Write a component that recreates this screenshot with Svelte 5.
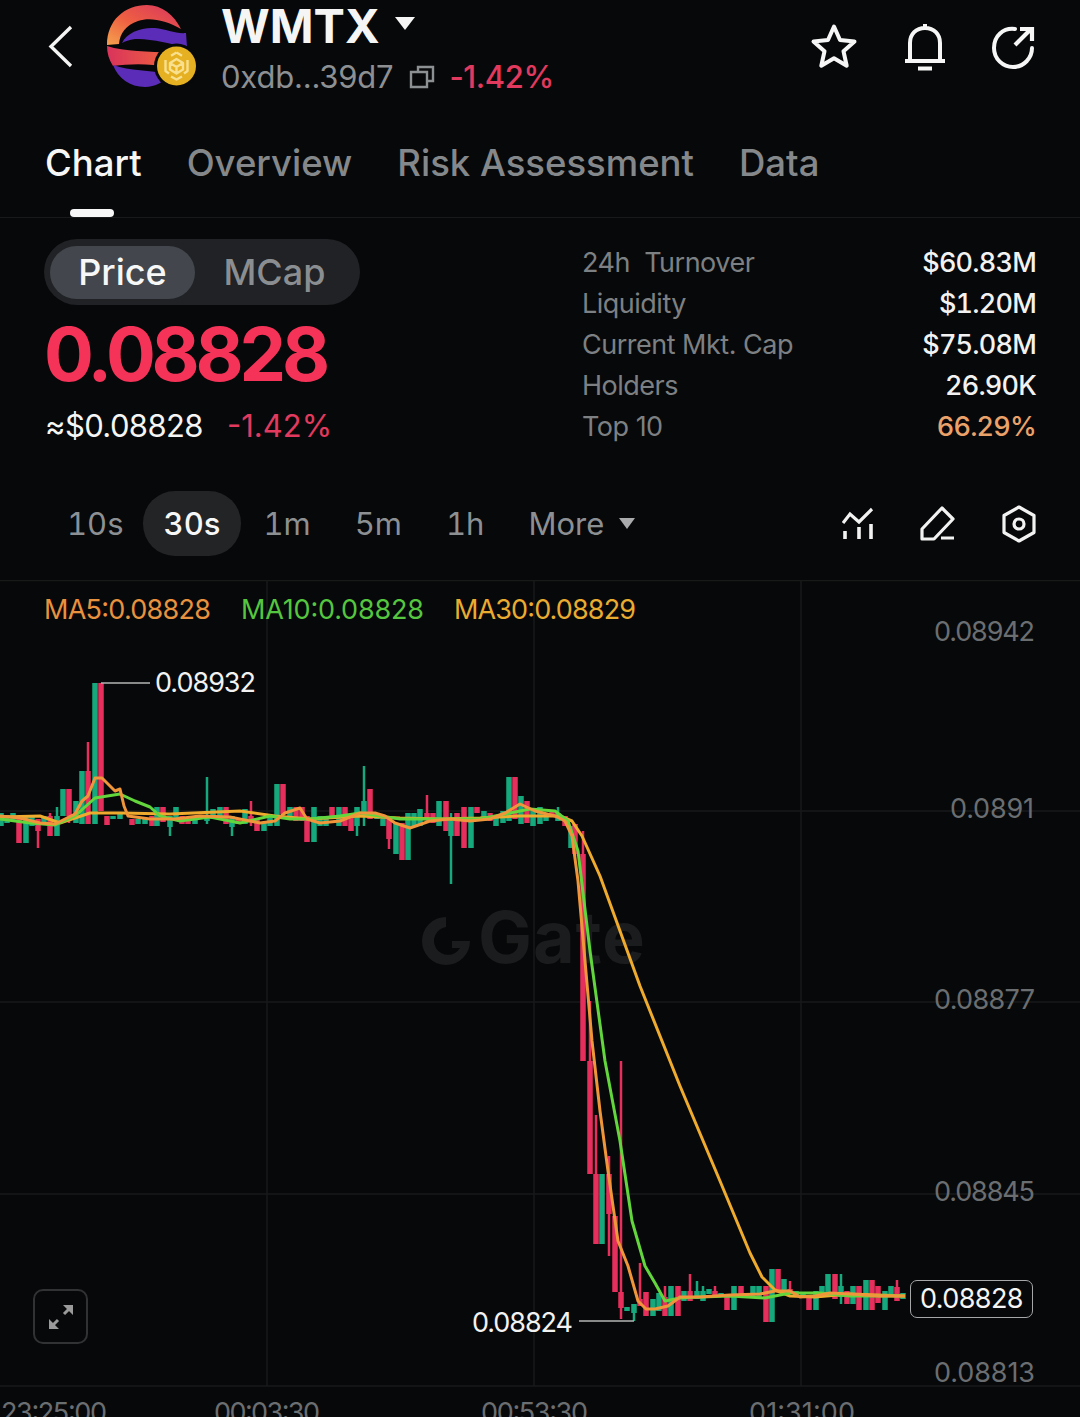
<script>
    const tabs = ['Chart', 'Overview', 'Risk Assessment', 'Data'];
    const stats = [
        ['24h  Turnover', '$60.83M'],
        ['Liquidity', '$1.20M'],
        ['Current Mkt. Cap', '$75.08M'],
        ['Holders', '26.90K'],
        ['Top 10', '66.29%']
    ];
    const frames = ['10s', '30s', '1m', '5m', '1h'];

    // [x, bodyTop, bodyBottom, colour, wickTop, wickBottom]
    const candles = [
        [1,812,825,'g'],[7,814,822,'g'],[13,812,820,'g'],[19,815,842,'r'],[26,815,842,'g'],[32,816,825,'g'],
        [38,818,830,'r',818,847],[44,815,822,'g'],[50,815,835,'r',812],[57,815,835,'g',806],[63,788,815,'g'],
        [69,788,815,'r',788,822],[76,800,822,'g'],[82,770,823,'g'],[88,770,823,'r',741],[95,682,823,'g'],
        [101,682,810,'r'],[107,815,824,'r'],[113,815,818,'g'],[120,812,818,'g'],[132,818,824,'r'],[138,818,823,'g'],
        [145,818,823,'g'],[152,815,825,'r'],[157,806,825,'g'],[163,806,821,'r'],[170,815,826,'g',815,835],
        [176,806,820,'g'],[182,815,823,'r'],[188,818,823,'r'],[195,815,823,'g'],[207,815,820,'g',776,823],
        [213,808,818,'g'],[220,806,815,'g'],[226,806,823,'r'],[232,815,826,'g',815,835],[238,818,823,'r'],
        [245,808,823,'g'],[251,815,820,'r',800,825],[257,818,830,'r'],[264,822,830,'g'],[270,815,825,'g'],
        [277,783,825,'g'],[283,783,813,'r'],[290,806,815,'g'],[296,806,820,'r'],[302,806,820,'r'],[307,815,841,'r'],
        [314,806,841,'g'],[320,815,825,'g'],[326,815,825,'g'],[332,806,818,'r'],[339,806,825,'g'],[345,806,825,'r'],
        [351,815,830,'r'],[357,806,825,'g',806,835],[364,800,815,'g',765,825],[370,788,818,'r'],[377,812,818,'g'],
        [383,815,825,'g',815,825],[389,817,838,'r',817,848],[396,822,853,'g'],[402,822,859,'r'],[408,812,859,'g'],
        [414,812,825,'g'],[420,808,825,'g'],[427,812,818,'r',794,822],[433,812,822,'r'],[439,800,825,'g'],
        [446,800,830,'r'],[451,820,835,'g',812,883],[457,812,835,'r'],[464,806,847,'r'],[471,806,847,'g'],
        [477,806,812,'r'],[484,810,820,'g'],[490,812,820,'r'],[496,815,825,'g'],[503,810,822,'g'],[509,776,820,'g'],
        [515,776,818,'r'],[521,795,823,'g'],[527,800,822,'r'],[533,810,825,'g'],[540,806,823,'g'],[546,812,820,'g'],
        [552,810,816,'r'],[558,812,820,'g',806,820],[565,815,825,'r',815,823],[571,825,847,'g'],[575,823,853,'r',823,855],
        [583,853,1060,'r',830],[590,1060,1173,'r',1000],[596,1173,1243,'r',1114],[602,1173,1243,'g'],[609,1173,1213,'r',1155,1255],
        [615,1215,1291,'r',1215],[621,1291,1307,'r',1060,1318],[627,1306,1310,'g'],[634,1303,1312,'g',1303,1320],
        [640,1298,1305,'r',1262],[646,1291,1315,'r'],[653,1298,1315,'g'],[659,1292,1310,'g'],[665,1296,1315,'r',1285],
        [671,1285,1315,'g'],[678,1285,1315,'r'],[684,1290,1300,'g'],[690,1290,1300,'r',1273],[697,1290,1298,'g',1280],
        [703,1290,1300,'g',1285],[709,1288,1293,'g'],[715,1290,1295,'r',1285],[721,1292,1296,'g'],[727,1295,1309,'r'],
        [734,1285,1309,'g'],[741,1285,1295,'r'],[747,1292,1296,'g'],[753,1285,1296,'g'],[759,1285,1296,'g'],[766,1285,1321,'r'],
        [772,1268,1321,'g'],[778,1268,1290,'r'],[784,1278,1292,'g'],[790,1288,1292,'r',1280],[796,1290,1296,'g'],[803,1292,1296,'g'],
        [809,1295,1309,'r'],[816,1290,1309,'g'],[822,1285,1295,'g'],[828,1273,1295,'g'],[835,1273,1298,'r'],[841,1285,1296,'g',1273,1303],
        [847,1290,1303,'r'],[853,1285,1303,'g'],[859,1285,1309,'r'],[866,1279,1309,'g'],[872,1279,1309,'r'],[878,1285,1302,'r'],
        [885,1290,1309,'g'],[891,1285,1296,'g'],[897,1286,1300,'r',1279],[903,1292,1298,'g']
    ];

    const ma5 = '0,815 20,817 40,822 55,823 65,818 75,813 82,800 88,795 95,777 102,777 110,785 115,790 120,788 124,805 128,815 150,818 175,818 200,815 230,816 260,822 275,820 285,812 300,807 307,818 320,822 340,820 360,812 375,812 385,815 395,822 410,827 430,820 450,818 470,820 490,818 505,812 520,803 535,810 555,815 565,820 572,835 578,880 585,960 592,1040 600,1110 608,1170 618,1240 628,1265 638,1300 646,1308 655,1308 668,1305 680,1296 700,1296 730,1294 760,1293 775,1290 790,1290 800,1296 815,1295 830,1292 850,1293 880,1295 905,1295';
    const ma10 = '0,818 30,822 55,824 75,815 95,797 120,793 135,800 150,806 160,815 180,820 210,816 240,822 270,815 290,818 310,818 340,815 360,812 380,815 400,818 430,818 460,818 480,818 510,812 530,808 555,810 568,820 578,850 590,950 605,1060 620,1140 632,1220 645,1265 655,1282 665,1300 680,1297 700,1296 730,1295 765,1297 790,1292 820,1292 850,1295 905,1295';
    const ma30 = '0,816 40,815 60,822 90,812 120,812 170,813 240,810 275,815 310,818 360,815 400,817 440,818 480,817 520,815 560,815 572,820 582,835 600,875 640,985 680,1085 720,1180 750,1252 762,1276 775,1289 790,1295 815,1296 850,1293 905,1295';
</script>

<div class="page">
    <header class="top">
        <svg class="back" width="26" height="44" viewBox="0 0 26 44">
            <path d="M24 3 L4 22.5 L24 42" fill="none" stroke="#f4f4f4" stroke-width="3.4" />
        </svg>
        <svg class="logo" width="94" height="92" viewBox="104 2 94 92">
            <defs>
                <linearGradient id="arc" x1="0" y1="1" x2="1" y2="0">
                    <stop offset="0" stop-color="#f5a24e" />
                    <stop offset="0.45" stop-color="#ee5f42" />
                    <stop offset="1" stop-color="#d8345f" />
                </linearGradient>
                <linearGradient id="band" x1="0" y1="0" x2="1" y2="0">
                    <stop offset="0" stop-color="#d9335c" />
                    <stop offset="1" stop-color="#f0653c" />
                </linearGradient>
            </defs>
            <path d="M107 45 C107 20 125 5 147 5 C162 5 174 15 181 29 C165 20 150 17 138 21 C126 25 120 33 119 44 Z" fill="url(#arc)" />
            <path d="M122 43 C127 32 142 27 155 28 C166 29 176 34 186 33 L187 47 C170 44 150 38 135 39 C129 40 125 41 122 43 Z" fill="#5a2cb8" />
            <path d="M107 46 C125 52 148 51 172 53 L168 68 C150 63 130 64 113 66 C109 60 107 53 107 46 Z" fill="url(#band)" />
            <path d="M113 65 C130 71 150 70 168 74 C165 82 155 87 145 87 C130 87 118 78 113 65 Z" fill="#5a2cb8" />
            <circle cx="176.500" cy="66" r="22.500" fill="#070809" />
            <circle cx="176.500" cy="66" r="19.500" fill="#e5b021" />
            <g fill="none" stroke="#f9e08f" stroke-width="2.400" stroke-linejoin="round">
                <path d="M176.500 52.500 L182 55.700 M176.500 52.500 L171 55.700" />
                <path d="M165.500 60 L165.500 71 L169 73.500 M187.500 60 L187.500 71 L184 73.500" />
                <path d="M171 76.500 L176.500 79.500 L182 76.500" />
                <path d="M176.500 59 L183 63 L183 69.500 L176.500 73.500 L170 69.500 L170 63 Z M170 63 L176.500 67 L183 63 M176.500 67 L176.500 73.500" />
            </g>
        </svg>
        <div class="token">
            <div class="name">WMTX<span class="caret big"></span></div>
            <div class="addr">
                <span>0xdb...39d7</span>
                <svg width="26" height="26" viewBox="0 0 26 26">
                    <path d="M9 7 V3 H24 V17 H19 M2 8 H18 V23 H2 Z" fill="none" stroke="#8d9093" stroke-width="2.400" />
                </svg>
                <span class="down">-1.42%</span>
            </div>
        </div>
        <div class="actions">
            <svg width="50" height="50" viewBox="0 0 50 50">
                <path d="M25 4.500 L31 18 L45.500 19.500 L34.500 29.300 L37.700 43.700 L25 36.300 L12.300 43.700 L15.500 29.300 L4.500 19.500 L19 18 Z" fill="none" stroke="#f6f6f6" stroke-width="4" stroke-linejoin="round" />
            </svg>
            <svg width="44" height="50" viewBox="0 0 44 50">
                <path d="M2 39 H42 M7 39 V21 C7 12 13 6 22 6 C31 6 37 12 37 21 V39 M22 2 V6 M15 46.500 H29" fill="none" stroke="#f6f6f6" stroke-width="4" />
            </svg>
            <svg width="44" height="46" viewBox="0 0 44 46">
                <path d="M24 5 C12 3.500 3 12 3 24 C3 35 12 43 22 43 C33 43 41 34 41 24" fill="none" stroke="#f6f6f6" stroke-width="4" stroke-linecap="round" />
                <path d="M24 21 L39 6 M29 5 H41 V17" fill="none" stroke="#f6f6f6" stroke-width="4.200" />
            </svg>
        </div>
    </header>

    <nav class="tabs">
        {#each tabs as tab, i}
            <div class="tab" class:on={i === 0}>{tab}</div>
        {/each}
    </nav>

    <section class="summary">
        <div class="left">
            <div class="toggle">
                <span class="opt active">Price</span>
                <span class="opt">MCap</span>
            </div>
            <div class="price">0.08828</div>
            <div class="sub"><span class="usd">≈$0.08828</span><span class="down">-1.42%</span></div>
        </div>
        <div class="stats">
            {#each stats as row, i}
                <div class="row">
                    <span class="label">{row[0]}</span>
                    <span class="val" class:warm={i === 4}>{row[1]}</span>
                </div>
            {/each}
        </div>
    </section>

    <div class="frames">
        {#each frames as f}
            <span class="frame" class:sel={f === '30s'}>{f}</span>
        {/each}
        <span class="frame more">More<span class="caret"></span></span>
        <div class="tools">
            <svg width="32" height="34" viewBox="0 0 32 34">
                <path d="M1 16 L8 7 L17 15 L30 2" fill="none" stroke="#f2f2f2" stroke-width="3.200" />
                <path d="M3 24 V32 M17 20 V32 M29 17 V32" fill="none" stroke="#f2f2f2" stroke-width="3.600" />
            </svg>
            <svg width="36" height="36" viewBox="0 0 36 36">
                <path d="M2 33 V23 L22 2 L33 13 L14 33 Z M21 32 H34" fill="none" stroke="#f2f2f2" stroke-width="3.200" stroke-linejoin="round" />
            </svg>
            <svg width="34" height="38" viewBox="0 0 34 38">
                <path d="M17 2 L32 10.500 V27.500 L17 36 L2 27.500 V10.500 Z" fill="none" stroke="#f2f2f2" stroke-width="3.200" stroke-linejoin="round" />
                <circle cx="17" cy="19" r="5" fill="none" stroke="#f2f2f2" stroke-width="3.200" />
            </svg>
        </div>
    </div>

    <section class="chart">
        <svg class="plot" width="1080" height="838" viewBox="0 579 1080 838">
            <g stroke="#17191a" stroke-width="1.500">
                <path d="M0 579.500 H1080 M0 810 H1080 M0 1001 H1080 M0 1193 H1080 M0 1385 H1080" />
                <path d="M267 579 V1385 M534 579 V1385 M801 579 V1385" />
            </g>

            <g fill="#1b1c1d">
                <path d="M446 916 A24 24 0 1 0 470 940 L452 940 L452 947 L460 947 A14 14 0 1 1 446 926 Z" />
                <text x="478" y="962" class="mark" textLength="167">Gate</text>
            </g>

            {#each candles as [x, top, bot, c, wt, wb]}
                <g fill={c === 'r' ? '#e62f5d' : '#16a97e'}>
                    <rect x={x - 2.750} y={top} width="5.500" height={Math.max(bot - top, 2)} />
                    <rect x={x - 1.250} y={wt ?? top} width="2.500" height={(wb ?? bot) - (wt ?? top)} />
                </g>
            {/each}

            <polyline points={ma30} class="ma" stroke="#eeab2d" />
            <polyline points={ma10} class="ma" stroke="#62d63c" />
            <polyline points={ma5} class="ma" stroke="#f0963a" />

            <path d="M101 682 H150 M579 1320 H634" stroke="#b4b4b4" stroke-width="1.500" fill="none" />
            <text x="155" y="691" class="mk" textLength="101">0.08932</text>
            <text x="472" y="1331" class="mk" textLength="101">0.08824</text>

            <text x="44" y="618" class="leg" fill="#e8923f" textLength="167">MA5:0.08828</text>
            <text x="241" y="618" class="leg" fill="#55c63f" textLength="183">MA10:0.08828</text>
            <text x="454" y="618" class="leg" fill="#e9ac30" textLength="182">MA30:0.08829</text>

            <g class="ax">
                <text x="934" y="640" textLength="101">0.08942</text>
                <text x="950" y="817" textLength="84">0.0891</text>
                <text x="934" y="1008" textLength="101">0.08877</text>
                <text x="934" y="1200" textLength="101">0.08845</text>
                <text x="934" y="1381" textLength="101">0.08813</text>
            </g>
            <g class="ax">
                <text x="1" y="1421" textLength="106">23:25:00</text>
                <text x="214" y="1421" textLength="106">00:03:30</text>
                <text x="481" y="1421" textLength="107">00:53:30</text>
                <text x="749" y="1421" textLength="106">01:31:00</text>
            </g>
        </svg>

        <div class="expand">
            <svg width="28" height="28" viewBox="0 0 28 28">
                <path d="M17 11 L23 5 M11 17 L5 23" stroke="#9a9a9a" stroke-width="3" fill="none" />
                <path d="M16 2 H26 V12 Z M2 16 V26 H12 Z" fill="#9a9a9a" />
            </svg>
        </div>
        <div class="last">0.08828</div>
    </section>
</div>

<style>
    :global(body) {
        background: #070809;
    }
    .page {
        width: 1080px;
        height: 1417px;
        overflow: hidden;
        background: #070809;
        color: #f5f5f5;
        font-family: Inter, "Liberation Sans", sans-serif;
    }

    .top {
        display: flex;
        align-items: flex-start;
        height: 130px;
        box-sizing: border-box;
        padding-left: 47px;
    }
    .back {
        margin-top: 24px;
    }
    .logo {
        margin: 2px 0 0 31px;
    }
    .token {
        margin-left: 23px;
    }
    .name {
        display: flex;
        align-items: flex-start;
        font-size: 47px;
        font-weight: 700;
        line-height: 52px;
    }
    .addr {
        display: flex;
        align-items: center;
        gap: 16px;
        color: #8d9093;
        font-size: 31px;
        line-height: 50px;
        letter-spacing: -0.2px;
    }
    .addr .down {
        margin-left: -2px;
        font-weight: 500;
        letter-spacing: -0.4px;
    }
    .down {
        color: #e23a5f;
    }
    .caret {
        display: inline-block;
        width: 0;
        height: 0;
        margin: 14px 0 0 15px;
        border-left: 8.500px solid transparent;
        border-right: 8.500px solid transparent;
        border-top: 11px solid #a9abad;
    }
    .caret.big {
        border-left-width: 10px;
        border-right-width: 10px;
        border-top: 13px solid #f5f5f5;
        margin: 17px 0 0 15px;
    }
    .actions {
        display: flex;
        align-items: center;
        gap: 44px;
        margin: 22px 45px 0 auto;
    }

    .tabs {
        display: flex;
        gap: 45px;
        height: 87px;
        padding-left: 45px;
        border-bottom: 1px solid #17191a;
        font-size: 36.500px;
        font-weight: 500;
        line-height: 66px;
        color: #85888b;
    }
    .tab {
        position: relative;
    }
    .tab.on {
        color: #f7f7f7;
    }
    .tab.on::after {
        content: '';
        position: absolute;
        left: 25px;
        bottom: 0;
        width: 44px;
        height: 8px;
        border-radius: 4px;
        background: #f7f7f7;
    }

    .summary {
        display: flex;
        justify-content: space-between;
        padding: 21px 44px 0 44px;
        height: 271px;
        box-sizing: border-box;
    }
    .toggle {
        display: flex;
        align-items: center;
        box-sizing: border-box;
        width: 316px;
        height: 66px;
        padding: 0 6px;
        border-radius: 33px;
        background: #202225;
        font-size: 36px;
        font-weight: 500;
        color: #8b8e91;
    }
    .opt {
        flex: 1;
        text-align: center;
        line-height: 53px;
    }
    .opt.active {
        flex: 0 0 145px;
        border-radius: 27px;
        background: #43474d;
        color: #f7f7f7;
    }
    .price {
        margin: 10px 0 0 0;
        font-size: 74px;
        font-weight: 700;
        line-height: 78px;
        letter-spacing: -4.200px;
        color: #f53358;
    }
    .sub {
        display: flex;
        gap: 24px;
        margin: 13px 0 0 1px;
        font-size: 31px;
        line-height: 40px;
    }
    .usd {
        letter-spacing: -0.6px;
    }
    .stats {
        width: 454px;
        margin-top: 3px;
    }
    .row {
        display: flex;
        justify-content: space-between;
        height: 41px;
        line-height: 41px;
        font-size: 27px;
    }
    .label {
        color: #7d8083;
        white-space: pre;
        letter-spacing: -0.5px;
    }
    .val {
        font-weight: 500;
        color: #f2f2f2;
        letter-spacing: -0.8px;
        font-variant-numeric: tabular-nums;
    }
    .warm {
        color: #eba26a;
    }

    .frames {
        display: flex;
        align-items: center;
        height: 65px;
        padding-left: 45px;
        margin-top: 2px;
        margin-bottom: 24px;
        font-size: 31px;
        color: #8d9093;
        font-variant-numeric: tabular-nums;
    }
    .frame {
        padding: 0 22px;
        line-height: 65px;
    }
    .frame.sel {
        margin-left: -3px;
        padding: 0 21px;
        background: #222426;
        border-radius: 32px;
        color: #f7f7f7;
        font-weight: 500;
    }
    .more {
        display: flex;
        align-items: flex-start;
    }
    .more .caret {
        margin-top: 27px;
    }
    .tools {
        display: flex;
        align-items: center;
        gap: 46px;
        margin-left: auto;
        margin-right: 44px;
    }

    .chart {
        position: relative;
        height: 838px;
    }
    .plot {
        display: block;
    }
    .ma {
        fill: none;
        stroke-width: 3;
        stroke-linejoin: round;
    }
    .mark {
        font-size: 72px;
        font-weight: 700;
    }
    .mk {
        font-size: 27px;
        fill: #f2f2f2;
    }
    .leg {
        font-size: 27px;
    }
    .ax text {
        font-size: 27px;
        fill: #6b6e71;
    }
    .expand {
        position: absolute;
        left: 33px;
        top: 709px;
        display: flex;
        align-items: center;
        justify-content: center;
        box-sizing: border-box;
        width: 55px;
        height: 55px;
        border: 2px solid #303233;
        border-radius: 10px;
    }
    .last {
        position: absolute;
        left: 910px;
        top: 700px;
        box-sizing: border-box;
        width: 123px;
        height: 38px;
        border: 1.500px solid #a5a7a8;
        border-radius: 7px;
        background: #070809;
        text-align: center;
        font-size: 27px;
        letter-spacing: -0.6px;
        line-height: 35px;
    }
</style>
